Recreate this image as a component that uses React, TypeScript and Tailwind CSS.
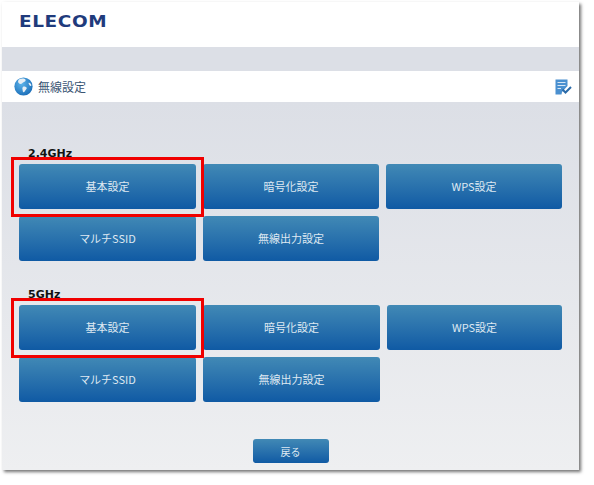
const jp = "font-['Noto_Sans_CJK_JP','Liberation_Sans',sans-serif]";

function Btn({ label }: { label: string }) {
  return (
    <button
      className={`${jp} flex h-[45px] items-center justify-center rounded-[3px] bg-gradient-to-b from-[#4189b5] to-[#0f5aa4] text-[11px] text-[#dfe9f2]`}
    >
      {label}
    </button>
  );
}

function Group({ title, className = "", cols }: { title: string; className?: string; cols: string }) {
  return (
    <section className={`relative ${className}`}>
      <h2 className="mb-[4px] h-[14px] pt-[1px] pl-[26px] font-['DejaVu_Sans',sans-serif] text-[11px] leading-[13px] font-bold text-[#111]">
        {title}
      </h2>
      <div className={`grid ${cols} gap-x-[7px] gap-y-[7px] pl-[17px]`}>
        <Btn label="基本設定" />
        <Btn label="暗号化設定" />
        <Btn label="WPS設定" />
        <Btn label="マルチSSID" />
        <Btn label="無線出力設定" />
      </div>
      <div className="absolute top-[11px] left-[9px] h-[60px] w-[193px] border-[3px] border-[#f00000]" />
    </section>
  );
}

function Globe() {
  return (
    <svg viewBox="0 0 20 20" className="h-[19px] w-[19px]">
      <defs>
        <radialGradient id="g" cx="0.4" cy="0.35" r="0.75">
          <stop offset="0" stopColor="#5db4ea" />
          <stop offset="1" stopColor="#1467b4" />
        </radialGradient>
      </defs>
      <circle cx="10" cy="10" r="9.6" fill="url(#g)" />
      <path d="M6 2.200c2-1 5-.8 6 .3 1 1.200-.6 2.500-2 3-1.200.4-1.500 1.800-3 1.800C5.500 7.300 4 5.800 4.300 4.500 4.500 3.500 5 2.800 6 2.200Z" fill="#e6eef5" />
      <path d="M9.500 10.200c1.500-.8 3.200 0 3.800 1 .5 1-.8 1.800-1.300 2.800-.5 1.200-1.500 2.500-2.300 1.800-.7-.7-.4-2-.8-3-.3-1 .2-2.100.6-2.600Z" fill="#e6eef5" />
      <path d="M15.500 6c1.200-.3 2.500 1 2.800 2.500.2 1-.7 1.200-1.500.6-.8-.7-2-2.800-1.300-3.100Z" fill="#e6eef5" />
    </svg>
  );
}

function NoteCheck() {
  return (
    <svg viewBox="0 0 17 16" className="h-[16px] w-[17px]">
      <path d="M0.500 0.500H12.500V7L7 13 6.500 15.500H0.500Z" fill="#4a90d0" />
      <path d="M2.500 3.500H10.500M2.500 6.500H10.500M2.500 9.500H6" stroke="#d6e6f5" strokeWidth="1.100" fill="none" />
      <path d="M7.500 10.500 10.500 13.500 16 8" stroke="#2a6aa8" strokeWidth="2" fill="none" />
    </svg>
  );
}

export default function App() {
  return (
    <div className="h-[485px] w-[594px] overflow-hidden bg-white pt-[2px] pl-[2px]">
      <div className="flex h-[468px] w-[577px] flex-col shadow-[2px_2px_3px_rgba(70,70,70,0.75)]">
        <header className="flex h-[45px] items-start bg-white pt-[10px] pl-[17px]">
          <span className="inline-block origin-left scale-x-[1.23] font-['DejaVu_Sans',sans-serif] text-[15px] leading-[20px] font-bold tracking-[0.5px] text-[#1f3b7c]">
            ELECOM
          </span>
        </header>
        <div className="h-[24px] bg-[#dcdfe6]" />
        <div className="flex h-[31px] items-center bg-white pr-[7px] pl-[12px]">
          <Globe />
          <span className={`${jp} ml-[5px] text-[12px] text-[#3a5573]`}>無線設定</span>
          <span className="ml-auto">
            <NoteCheck />
          </span>
        </div>
        <main className="flex flex-1 flex-col bg-gradient-to-b from-[#dcdfe6] to-[#eeeff1]">
          <Group title="2.4GHz" className="mt-[44px]" cols="grid-cols-[177px_176px_176px]" />
          <Group title="5GHz" className="mt-[26px]" cols="grid-cols-[177px_177px_175px]" />
          <div className="mt-[37px] flex justify-center">
            <button
              className={`${jp} h-[24px] w-[76px] rounded-[3px] bg-gradient-to-b from-[#4189b5] to-[#0f5aa4] text-[10px] text-[#dfe9f2]`}
            >
              戻る
            </button>
          </div>
        </main>
      </div>
    </div>
  );
}
